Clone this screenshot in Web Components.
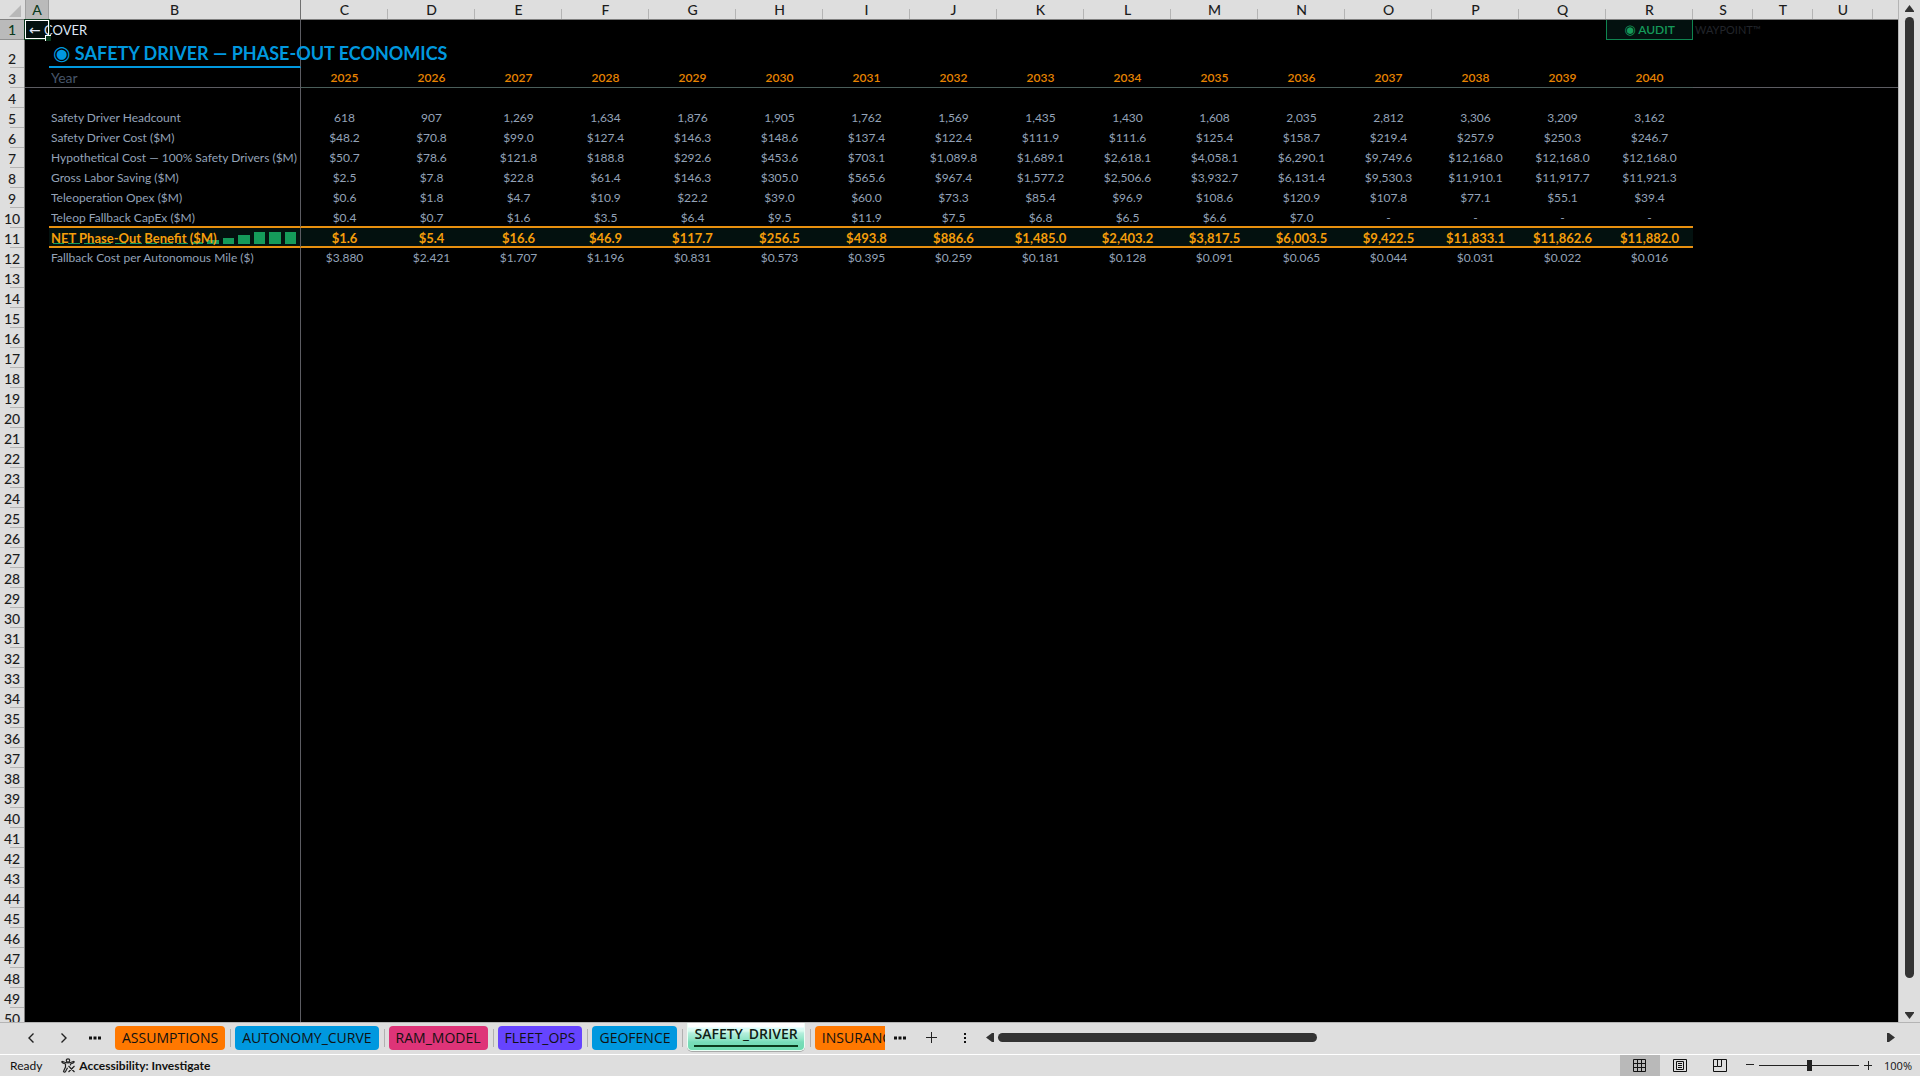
<!DOCTYPE html>
<html lang="en">
<head>
<meta charset="utf-8">
<title>SAFETY_DRIVER</title>
<style>
  html, body { height: 100%; margin: 0; }
  body { background: #dedede; font-family: Lato, "Open Sans", sans-serif; overflow: hidden; }
</style>
</head>
<body>
<workbook-window>
  <sheet-grid slot="grid"></sheet-grid>
  <scroll-track slot="vscroll" direction="vertical"></scroll-track>
  <tab-strip slot="tabs">
    <sheet-tab color="#ff7800">ASSUMPTIONS</sheet-tab>
    <sheet-tab color="#0098df">AUTONOMY_CURVE</sheet-tab>
    <sheet-tab color="#de3478">RAM_MODEL</sheet-tab>
    <sheet-tab color="#6644ff">FLEET_OPS</sheet-tab>
    <sheet-tab color="#0098df">GEOFENCE</sheet-tab>
    <sheet-tab selected>SAFETY_DRIVER</sheet-tab>
    <sheet-tab color="#ff7800">INSURANCE</sheet-tab>
  </tab-strip>
  <status-bar slot="status"></status-bar>
</workbook-window>

<script>
class Base extends HTMLElement {
  constructor() {
    super();
    this.attachShadow({ mode: 'open' });
  }
  connectedCallback() { this.shadowRoot.innerHTML = this.render(); }
}

customElements.define('workbook-window', class extends Base {
  render() {
    return `<style>
      :host { display: flex; flex-direction: column; height: 100vh; background: #dedede; }
      .sheet { flex: 1; min-height: 0; display: flex; border-bottom: 1px solid #b4b4b4; }
      ::slotted(sheet-grid) { flex: 1; min-width: 0; }
    </style>
    <div class="sheet"><slot name="grid"></slot><slot name="vscroll"></slot></div>
    <slot name="tabs"></slot>
    <slot name="status"></slot>`;
  }
});

const YEARS = Array.from({ length: 16 }, (_, i) => String(2025 + i));
const ROWS = {
  5: ['Safety Driver Headcount', '618 907 1,269 1,634 1,876 1,905 1,762 1,569 1,435 1,430 1,608 2,035 2,812 3,306 3,209 3,162'],
  6: ['Safety Driver Cost ($M)', '$48.2 $70.8 $99.0 $127.4 $146.3 $148.6 $137.4 $122.4 $111.9 $111.6 $125.4 $158.7 $219.4 $257.9 $250.3 $246.7'],
  7: ['Hypothetical Cost — 100% Safety Drivers ($M)', '$50.7 $78.6 $121.8 $188.8 $292.6 $453.6 $703.1 $1,089.8 $1,689.1 $2,618.1 $4,058.1 $6,290.1 $9,749.6 $12,168.0 $12,168.0 $12,168.0'],
  8: ['Gross Labor Saving ($M)', '$2.5 $7.8 $22.8 $61.4 $146.3 $305.0 $565.6 $967.4 $1,577.2 $2,506.6 $3,932.7 $6,131.4 $9,530.3 $11,910.1 $11,917.7 $11,921.3'],
  9: ['Teleoperation Opex ($M)', '$0.6 $1.8 $4.7 $10.9 $22.2 $39.0 $60.0 $73.3 $85.4 $96.9 $108.6 $120.9 $107.8 $77.1 $55.1 $39.4'],
  10: ['Teleop Fallback CapEx ($M)', '$0.4 $0.7 $1.6 $3.5 $6.4 $9.5 $11.9 $7.5 $6.8 $6.5 $6.6 $7.0 - - - -'],
  11: ['NET Phase-Out Benefit ($M)', '$1.6 $5.4 $16.6 $46.9 $117.7 $256.5 $493.8 $886.6 $1,485.0 $2,403.2 $3,817.5 $6,003.5 $9,422.5 $11,833.1 $11,862.6 $11,882.0'],
  12: ['Fallback Cost per Autonomous Mile ($)', '$3.880 $2.421 $1.707 $1.196 $0.831 $0.573 $0.395 $0.259 $0.181 $0.128 $0.091 $0.065 $0.044 $0.031 $0.022 $0.016']
};

customElements.define('spark-bars', class extends Base {
  render() {
    const v = this.getAttribute('values').split(' ').map(Number);
    const max = Math.max(...v);
    return `<style>
      :host { display: flex; align-items: flex-end; gap: 4px; height: 12px; }
      i { flex: 1; background: #159a5a; min-height: 1px; }
    </style>` + v.map(n => `<i style="height:${Math.round(n / max * 100)}%"></i>`).join('');
  }
});

customElements.define('sheet-grid', class extends Base {
  row(n) {
    const tail = '<td></td><td></td><td></td><td></td>';
    const head = `<tr class="r${n}"><th scope="row">${n}</th>`;
    if (n === 1) {
      return head + `<td class="sel"><a href="#COVER"><span class="arrow">←</span> COVER</a><span class="cursor"></span></td><td class="b"></td>` +
        '<td></td>'.repeat(15) + `<td class="audit"><span class="dot">◉</span> AUDIT</td><td class="mark">WAYPOINT™</td><td></td><td></td><td></td></tr>`;
    }
    if (n === 2) {
      return head + `<td></td><td class="b title"><span class="dot">◉</span> SAFETY DRIVER — PHASE-OUT ECONOMICS</td>` + '<td></td>'.repeat(16) + tail + '</tr>';
    }
    let label = '', vals = Array(16).fill(''), extra = '';
    if (n === 3) { label = 'Year'; vals = YEARS; }
    if (ROWS[n]) { label = ROWS[n][0]; vals = ROWS[n][1].split(' '); }
    if (n === 11) extra = `<spark-bars values="${vals.map(v => v.replace(/[$,]/g, '')).join(' ')}"></spark-bars>`;
    return head + `<td></td><td class="b">${extra}<span class="lbl">${label}</span></td>` + vals.map(v => `<td class="v">${v}</td>`).join('') + tail + '</tr>';
  }
  render() {
    const letters = 'ABCDEFGHIJKLMNOPQRSTU'.split('');
    let rows = '';
    for (let n = 1; n <= 50; n++) rows += this.row(n);
    return `<style>
      :host { display: block; overflow: hidden; background: #000; border-right: 1px solid #b4b4b4; }
      table { width: 100%; table-layout: fixed; border-collapse: separate; border-spacing: 0; color: #94a3b8; font-size: 12px; }
      th, td { padding: 0; box-sizing: border-box; height: 20px; line-height: 18px; white-space: nowrap; }
      .rh { width: 25px; } .ca { width: 24px; } .cb { width: 252px; } .cv { width: 87px; } .cs { width: 60px; }
      th { padding-top: 1px; background: #dedede; color: #1c1c1c; font-size: 14px; font-weight: 500; }
      thead th { border-bottom: 1px solid #808080; text-align: center;
        background: linear-gradient(#b4b4b4, #b4b4b4) right bottom / 1px 10px no-repeat #dedede; }
      thead th.hb { background: #dedede; border-right: 1px solid #707070; }
      thead th.ha { background: #bababa; border-right: 1px solid #a0a0a0; border-left: 1px solid #a0a0a0; color: #0b3a1c; }
      thead th.corner { background: #dedede; }
      .corner svg { display: block; margin: 2px 0 0 9px; }
      tbody th { border-right: 1px solid #808080; text-align: center;
        background: linear-gradient(#b4b4b4, #b4b4b4) right bottom / 14px 1px no-repeat #dedede; }
      tbody .r1 th { background: #bababa; color: #0b3a1c; border-bottom: 1px solid #909090; }
      .r2 th { vertical-align: bottom; }
      .r2 th, .r2 td { height: 28px; }
      td.b { border-right: 1px solid #5c5c62; padding-left: 2px; position: relative; }
      td.v { text-align: center; }
      .lbl { display: block; overflow: hidden; position: relative; }
      .sel { position: relative; background: #03110f; }
      .sel a { color: #dfe6f5; text-decoration: none; font-size: 13px; padding-left: 4px; position: relative; z-index: 1; }
      .arrow { font: 14px/14px "DejaVu Sans", sans-serif; }
      .cursor { position: absolute; inset: -1px -1px 0 -1px; border: 1px solid #0b3a1c; box-shadow: inset 0 0 0 1px #fff; z-index: 2; }
      .cursor::after { content: ""; position: absolute; right: -2px; bottom: -2px; width: 6px; height: 6px; background: #0b3a1c; border: solid #fff; border-width: 1px 0 0 1px; box-sizing: border-box; }
      .audit { border: 1px solid #0f8550; border-top: 0; background: #03110f; color: #159a5a; font-weight: 600; text-align: center; }
      .audit .dot { font: 13px/12px "DejaVu Sans", sans-serif; }
      .mark { color: #22252b; padding-left: 2px; font-size: 11px; }
      .r2 td.title { color: #0098df; font-size: 18px; font-weight: 700; border-bottom: 2px solid #0098df; line-height: 24px; padding-left: 4px; }
      .title .dot { font: 20px/18px "DejaVu Sans", sans-serif; }
      .r3 td.b { color: #475569; font-size: 14px; }
      .r3 td { border-bottom: 1px solid #5c5c62; }
      .r3 td.v { color: #e88400; font-weight: 600; border-bottom-color: #4a5e5a; }
      .r10 td.b, .r10 td.v, .r11 td.b, .r11 td.v { border-bottom: 2px solid #e8900f; padding-top: 2px; line-height: 16px; }
      .r11 td.b, .r11 td.v { background: #03110f; color: #f59e0b; font-weight: 700; font-size: 13px; }
      .r11 spark-bars { position: absolute; left: 4px; right: 4px; bottom: 2px; }
    </style>
    <table>
      <colgroup><col class="rh"><col class="ca"><col class="cb">${'<col class="cv">'.repeat(16)}${'<col class="cs">'.repeat(3)}<col></colgroup>
      <thead><tr><th class="corner"><svg width="12" height="12" viewBox="0 0 12 12"><path d="M12 0V12H0Z" fill="#b8b8b8"/></svg></th>
      ${letters.map(l => `<th scope="col" class="${l === 'A' ? 'ha' : l === 'B' ? 'hb' : ''}">${l}</th>`).join('')}<th class="corner"></th></tr></thead>
      <tbody>${rows}</tbody>
    </table>`;
  }
});

customElements.define('scroll-track', class extends Base {
  render() {
    const vert = this.getAttribute('direction') === 'vertical';
    return vert ? `<style>
      :host { display: flex; flex-direction: column; align-items: center; width: 21px; box-sizing: border-box; padding: 5px 0 2px; gap: 4px; }
      button { border: 0; padding: 0; background: none; display: block; height: 8px; }
      svg { display: block; }
      .track { flex: 1; min-height: 0; padding-bottom: 30px; box-sizing: border-box; }
      .thumb { width: 9px; height: 100%; border-radius: 5px; background: #333; }
    </style>
    <button aria-label="Scroll up"><svg width="9" height="8"><path d="M4.5 0L9 6V7H0V6Z" fill="#333"/></svg></button>
    <div class="track"><div class="thumb"></div></div>
    <button aria-label="Scroll down"><svg width="9" height="8"><path d="M4.5 7L9 1V0H0V1Z" fill="#333"/></svg></button>`
    : `<style>
      :host { display: flex; align-items: center; gap: 4px; }
      button { border: 0; padding: 0; background: none; display: block; }
      svg { display: block; }
      .track { flex: 1; }
      .thumb { width: 36%; height: 9px; border-radius: 5px; background: #333; }
    </style>
    <button aria-label="Scroll left"><svg width="8" height="9"><path d="M0 4.5L6 0H8V9H6Z" fill="#333"/></svg></button>
    <div class="track"><div class="thumb"></div></div>
    <button aria-label="Scroll right"><svg width="8" height="9"><path d="M8 4.5L2 0H0V9H2Z" fill="#333"/></svg></button>`;
  }
});

customElements.define('tab-strip', class extends Base {
  render() {
    return `<style>
      :host { display: flex; align-items: flex-start; height: 31px; border-bottom: 1px solid #fff; padding-right: 25px; }
      button { border: 0; padding: 0; background: none; width: 33px; height: 29px; display: flex; align-items: center; justify-content: center; flex: none; }
      .nav { display: flex; width: 115px; box-sizing: border-box; padding: 0 4px 0 14px; flex: none; }
      .tabs { display: flex; width: 770px; overflow: hidden; height: 31px; flex: none; }
      .more { width: 30px; }
      scroll-track { flex: 1; margin-left: 5px; height: 29px; }
    </style>
    <div class="nav">
      <button aria-label="Previous sheet"><svg width="8" height="12" viewBox="0 0 8 12"><path d="M6.500 1.500L2 6l4.500 4.500" fill="none" stroke="#222" stroke-width="1.400"/></svg></button>
      <button aria-label="Next sheet"><svg width="8" height="12" viewBox="0 0 8 12"><path d="M1.500 1.500L6 6l-4.500 4.500" fill="none" stroke="#222" stroke-width="1.400"/></svg></button>
      <button class="more" aria-label="All sheets"><svg width="12" height="4"><path d="M0 .5h3v3H0zM4.500 .5h3v3h-3zM9 .5h3v3H9z" fill="#111"/></svg></button>
    </div>
    <div class="tabs"><slot></slot></div>
    <button class="more" aria-label="More sheets"><svg width="12" height="4"><path d="M0 .5h3v3H0zM4.500 .5h3v3h-3zM9 .5h3v3H9z" fill="#111"/></svg></button>
    <button aria-label="New sheet"><svg width="12" height="12"><path d="M5.500 0v11M0 5.500h11" stroke="#222" stroke-width="1"/></svg></button>
    <button aria-label="Resize tab strip"><svg width="4" height="11"><path d="M1 1h2v2H1zM1 5h2v2H1zM1 9h2v2H1z" fill="#111"/></svg></button>
    <scroll-track></scroll-track>`;
  }
});

customElements.define('sheet-tab', class extends Base {
  render() {
    return `<style>
      :host { display: flex; align-items: flex-start; flex: none; height: 31px; }
      :host::after { content: ""; width: 1px; height: 18px; background: #b0b0b0; margin: 6px 4px 0 5px; }
      button { height: 24px; border: 0; border-radius: 4px; padding: 0 7px; margin-top: 3px; background: ${this.getAttribute('color')};
        font: 14px/24px "Open Sans", sans-serif; color: #111; white-space: nowrap; }
      :host([selected]) button { height: 28px; padding: 0 6px; margin-top: 0; border: 1px solid #eafff5; border-top: 0; border-radius: 0 0 5px 5px; box-shadow: 0 1px 0 #a8a8a8;
        background: linear-gradient(#fff 4px, #dcfcfa 5px, #d9fbee 8px, #b5efdd 10px, #93e6c8 16px, #78dcb9 19px, #6edbb0); font-weight: 600; color: #102015; display: flex; flex-direction: column; }
      :host([selected]) span { line-height: 22px; border-bottom: 2px solid #0b3a1c; }
    </style><button role="tab"><span><slot></slot></span></button>`;
  }
});

customElements.define('status-bar', class extends Base {
  render() {
    return `<style>
      :host { display: flex; align-items: center; height: 21px; padding: 0 8px 0 10px; color: #111; font: 12px/21px Lato, sans-serif; }
      button { border: 0; padding: 0; background: none; font: inherit; color: inherit; display: flex; align-items: center; justify-content: center; height: 21px; }
      .acc { margin-left: 19px; gap: 3px; font-weight: 700; }
      .views { display: flex; margin-left: auto; }
      .views button { width: 40px; }
      .views .on { background: #b9b9b9; }
      .zoom { display: flex; align-items: center; gap: 5px; margin-left: 6px; }
      .pct { margin-left: 12px; font: 11px/21px "Open Sans", sans-serif; }
      input { appearance: none; -webkit-appearance: none; width: 100px; height: 12px; margin: 0; background: linear-gradient(#222, #222) center / 100% 1px no-repeat; }
      input::-webkit-slider-thumb { -webkit-appearance: none; width: 5px; height: 11px; background: #222; }
    </style>
    <span>Ready</span>
    <button class="acc"><svg width="15" height="15" viewBox="0 0 15 15" fill="none" stroke="#222" stroke-width="1.200"><circle cx="7" cy="2.500" r="1.700"/><path d="M1 3.200C.4 4.600 1.500 5 4.500 6v3L2.500 13.500c.8 1.200 1.800.6 2.200-.3L6.500 9.800M13 3.200c.6 1.400-.5 1.800-3.500 2.800v1.500M1 3.200C3 4 5 4.800 7 4.800S11 4 13 3.200M7.500 8l6 6M13.500 8l-6 6"/></svg>Accessibility: Investigate</button>
    <div class="views">
      <button class="on" aria-label="Normal"><svg width="14" height="14" fill="none" stroke="#111"><path d="M.5 .5h12v12H.5zM4.500 .5v12M8.500 .5v12M.5 4.500h12M.5 8.500h12"/></svg></button>
      <button aria-label="Page layout"><svg width="14" height="14" fill="none" stroke="#111"><path d="M.5 .5h13v12H.5zM3.500 2.500h7v8h-7zM5 4.500h4M5 6.500h4M5 8.500h4"/></svg></button>
      <button aria-label="Page break preview"><svg width="14" height="14" fill="none" stroke="#111"><path d="M.5 .5h13v12H.5zM4.500 .5v7h4v-7M.5 7.500h4"/></svg></button>
    </div>
    <div class="zoom">
      <button aria-label="Zoom out"><svg width="8" height="9"><path d="M0 3.500h8" stroke="#222"/></svg></button>
      <input type="range" min="0" max="100" value="50" aria-label="Zoom">
      <button aria-label="Zoom in"><svg width="8" height="9"><path d="M0 4.500h8M4.500 0v9" stroke="#222"/></svg></button>
    </div>
    <button class="pct">100%</button>`;
  }
});
</script>
</body>
</html>
